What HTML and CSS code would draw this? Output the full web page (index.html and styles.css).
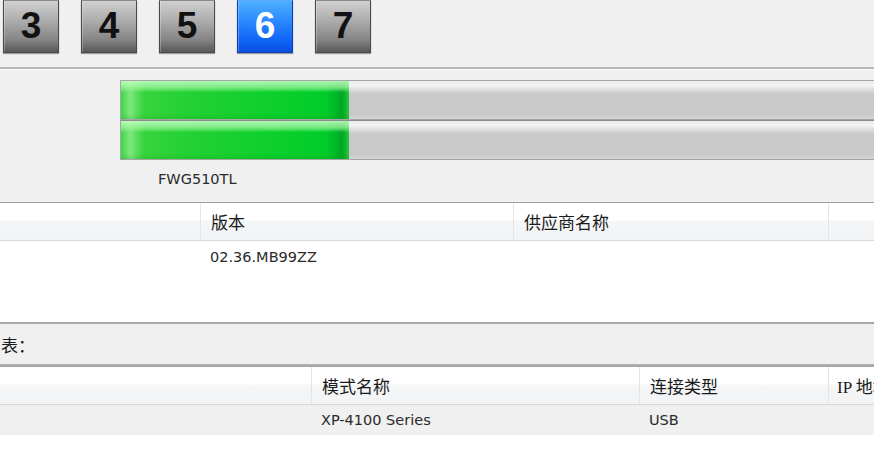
FILE: index.html
```html
<!DOCTYPE html>
<html lang="zh-CN">
<head>
<meta charset="utf-8">
<title>Firmware</title>
<link rel="stylesheet" href="styles.css">
</head>
<body>
<div class="app">
  <div class="toolbar">
    <div class="num-btn">3</div>
    <div class="num-btn">4</div>
    <div class="num-btn">5</div>
    <div class="num-btn active">6</div>
    <div class="num-btn">7</div>
  </div>
  <div class="separator"></div>
  <div class="progress-area">
    <div class="bar"><div class="fill" style="width:228px"></div></div>
    <div class="bar"><div class="fill" style="width:228px"></div></div>
    <div class="model-label">FWG510TL</div>
  </div>
  <div class="list list-one">
    <div class="list-head">
      <div class="hcell"></div>
      <div class="hcell">版本</div>
      <div class="hcell">供应商名称</div>
      <div class="hcell"></div>
    </div>
    <div class="list-row">
      <div class="cell"></div>
      <div class="cell">02.36.MB99ZZ</div>
      <div class="cell"></div>
      <div class="cell"></div>
    </div>
  </div>
  <div class="section-label">表：</div>
  <div class="list list-two">
    <div class="list-head">
      <div class="hcell"></div>
      <div class="hcell">模式名称</div>
      <div class="hcell">连接类型</div>
      <div class="hcell">IP 地址</div>
    </div>
    <div class="list-row selected">
      <div class="cell"></div>
      <div class="cell">XP-4100 Series</div>
      <div class="cell">USB</div>
      <div class="cell"></div>
    </div>
  </div>
</div>
</body>
</html>
```
FILE: styles.css
```css
html, body {
  margin: 0;
  padding: 0;
  background: #f0f0f0;
}
body {
  width: 874px;
  height: 470px;
  overflow: hidden;
  font-family: "DejaVu Sans", "Noto Sans CJK SC", sans-serif;
  color: #1e1e1e;
}
.app {
  display: flex;
  flex-direction: column;
  width: 874px;
  height: 470px;
  overflow: hidden;
}
.toolbar {
  display: flex;
  gap: 22px;
  padding-left: 3px;
  height: 54px;
  align-items: flex-start;
}
.num-btn {
  width: 56px;
  height: 53px;
  box-sizing: border-box;
  border: 1px solid #4a4a4a;
  border-top-color: #8a8a8a;
  background: linear-gradient(#d0d0d0 0%, #b0b0b0 35%, #868686 75%, #585858 100%);
  box-shadow: 0 1px 1px rgba(0,0,0,0.35), inset 1px 0 0 rgba(255,255,255,0.25);
  display: flex;
  align-items: center;
  justify-content: center;
  font-family: "Liberation Sans", Arial, sans-serif;
  font-weight: bold;
  font-size: 37px;
  color: #111;
  padding-bottom: 2px;
}
.num-btn.active {
  border-color: #0b3fb8;
  border-top-color: #5aa8ff;
  background: linear-gradient(#4fb0ff 0%, #2a88ff 40%, #0f62f6 80%, #0a4fe0 100%);
  color: #ffffff;
}
.separator {
  margin-top: 13px;
  height: 2px;
  background: #b6b6b6;
  border-bottom: 1px solid #fafafa;
}
.progress-area {
  padding-top: 10px;
  padding-left: 120px;
  height: 119px;
  box-sizing: border-box;
  display: flex;
  flex-direction: column;
}
.bar {
  width: 780px;
  height: 40px;
  box-sizing: border-box;
  border: 1px solid #a6a6a6;
  border-right: none;
  background: linear-gradient(#ececec 0%, #f4f4f4 12%, #d8d8d8 25%, #c9c9c9 35%, #c9c9c9 88%, #d4d4d4 100%);
  display: flex;
}
.bar + .bar {
  border-top-color: #8c8c8c;
}
.fill {
  height: 100%;
  background:
    linear-gradient(rgba(200,255,200,0.85) 0%, rgba(160,245,160,0.7) 18%, rgba(255,255,255,0) 30%, rgba(255,255,255,0) 85%, rgba(0,120,0,0.15) 100%),
    linear-gradient(90deg, #3ed64a 0%, #7ee87e 4%, #36d43c 10%, #22d133 30%, #10d02c 60%, #00cc2a 90%, #00a824 97%, #2cc83a 100%);
}
.model-label {
  margin-top: 10px;
  margin-left: 38px;
  font-size: 14.5px;
  line-height: 18px;
  color: #2a2a2a;
}
.list {
  background: #ffffff;
  border-top: 1px solid #a0a0a0;
  box-sizing: border-box;
}
.list-one {
  margin-top: 13px;
  height: 122px;
  border-bottom: 2px solid #a8a8a8;
}
.list-two {
  flex: 1;
}
.list-head, .list-row {
  display: grid;
}
.list-one .list-head, .list-one .list-row {
  grid-template-columns: 200px 313px 315px 1fr;
}
.list-two .list-head, .list-two .list-row {
  grid-template-columns: 311px 328px 189px 1fr;
}
.list-head {
  height: 37px;
  background: linear-gradient(#ffffff 0%, #ffffff 45%, #f5f6f7 50%, #f2f3f4 100%);
  border-bottom: 1px solid #d9d9d9;
}
.hcell {
  display: flex;
  align-items: center;
  padding-left: 10px;
  border-left: 1px solid #e3e4e6;
  font-size: 17px;
  color: #1a1a1a;
  white-space: nowrap;
  overflow: hidden;
}
.hcell:first-child {
  border-left: none;
}
.list-two .hcell:last-child {
  padding-left: 8px;
  font-family: "Liberation Serif", "Noto Sans CJK SC", serif;
}
.list-row {
  height: 30px;
}
.list-row.selected {
  background: #f0f0f0;
}
.cell {
  display: flex;
  align-items: center;
  padding-left: 10px;
  font-size: 14.5px;
  color: #2a2a2a;
  white-space: nowrap;
}
.cell:empty {
  padding-left: 0;
}
.list-one .list-row .cell:nth-child(2) {
  padding-top: 2px;
}
.section-label {
  height: 42px;
  display: flex;
  align-items: center;
  padding-left: 1px;
  font-size: 17px;
  color: #1a1a1a;
  border-bottom: 2px solid #b0b0b0;
  box-sizing: border-box;
}
```
